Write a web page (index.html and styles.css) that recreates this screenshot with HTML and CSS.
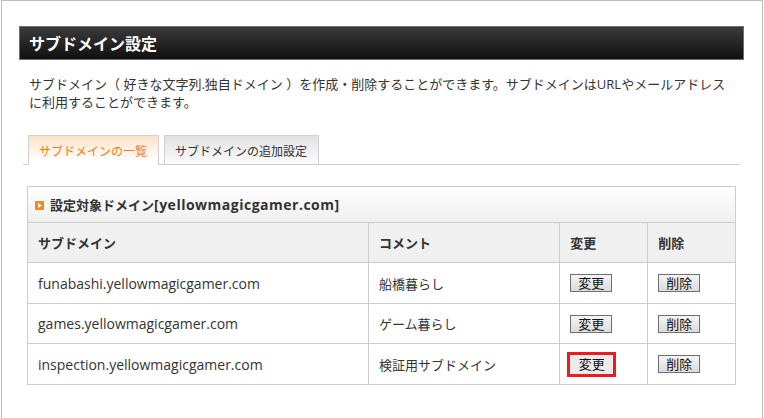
FILE: index.html
```html
<!DOCTYPE html>
<html lang="ja">
<head>
<meta charset="utf-8">
<link rel="stylesheet" href="styles.css">
</head>
<body>
<div class="frame">
  <div class="section">
    <h1 class="page-title">サブドメイン設定</h1>
    <p class="desc">サブドメイン（ 好きな文字列.独自ドメイン ）を作成・削除することができます。サブドメインはURLやメールアドレス<br>に利用することができます。</p>
    <div class="tabs">
      <div class="tab active">サブドメインの一覧</div>
      <div class="tab">サブドメインの追加設定</div>
    </div>
    <div class="box">
      <div class="box-title"><span class="mark"><svg width="9" height="9" viewBox="0 0 9 9"><rect width="9" height="9" fill="#f0891e"/><path d="M3 2 L7 4.5 L3 7 Z" fill="#fff"/></svg></span>設定対象ドメイン<span class="latin">[yellowmagicgamer.com]</span></div>
      <table class="list">
        <colgroup>
          <col class="c-sub"><col class="c-com"><col class="c-btn"><col class="c-btn2">
        </colgroup>
        <thead>
          <tr><th>サブドメイン</th><th>コメント</th><th>変更</th><th>削除</th></tr>
        </thead>
        <tbody>
          <tr class="r1"><td class="dom">funabashi.yellowmagicgamer.com</td><td>船橋暮らし</td><td><button class="btn">変更</button></td><td><button class="btn">削除</button></td></tr>
          <tr class="r2"><td class="dom">games.yellowmagicgamer.com</td><td>ゲーム暮らし</td><td><button class="btn">変更</button></td><td><button class="btn">削除</button></td></tr>
          <tr class="r3"><td class="dom">inspection.yellowmagicgamer.com</td><td>検証用サブドメイン</td><td><button class="btn hl">変更</button></td><td><button class="btn">削除</button></td></tr>
        </tbody>
      </table>
    </div>
  </div>
</div>
</body>
</html>
```
FILE: styles.css
```css
html, body {
  margin: 0;
  padding: 0;
  background: #fff;
}
body {
  font-family: "Open Sans", "Noto Sans CJK JP", sans-serif;
  color: #333;
  font-size: 13px;
}
.frame {
  margin-left: 1px;
  width: 762px;
  height: 418px;
  box-sizing: border-box;
  border: 1px solid #bdbdbd;
  border-bottom: none;
  padding: 25px 18px 0 17px;
}
.section {
  width: 725px;
}
.page-title {
  margin: 0;
  height: 34px;
  box-sizing: border-box;
  border: 1px solid #6e6e6e;
  background: linear-gradient(#3b3b3b, #101010);
  color: #fff;
  font-family: "Noto Sans CJK JP", sans-serif;
  font-size: 16px;
  font-weight: bold;
  line-height: 32px;
  padding-left: 9px;
}
.desc {
  margin: 15px 0 0 0;
  padding-left: 10px;
  line-height: 18px;
  font-size: 13px;
  color: #333;
  white-space: nowrap;
}
.tabs {
  display: flex;
  gap: 5px;
  margin: 24px 4px 0 4px;
  padding-left: 5px;
  border-bottom: 1px solid #ccc;
  height: 29px;
}
.tab {
  height: 29px;
  box-sizing: border-box;
  border: 1px solid #cfcfcf;
  border-bottom: none;
  font-family: "Noto Sans CJK JP", sans-serif;
  font-size: 12px;
  line-height: 30px;
  padding: 0 11px 0 10px;
  color: #333;
  background: linear-gradient(#e2e2e2, #fbfbfb);
}
.tab.active {
  height: 30px;
  color: #f47a16;
  background: linear-gradient(#fde2c6, #ffffff 85%);
}
.box {
  margin: 21px 8px 0 8px;
  border: 1px solid #ccc;
}
.box-title {
  height: 36px;
  box-sizing: border-box;
  border-bottom: 1px solid #ccc;
  background: linear-gradient(#ffffff, #efefef);
  font-family: "Noto Sans CJK JP", sans-serif;
  font-weight: bold;
  font-size: 13px;
  line-height: 36px;
  padding-left: 7px;
  display: flex;
  align-items: center;
}
.box-title .latin {
  font-family: "Open Sans", sans-serif;
  font-size: 14px;
  font-weight: bold;
  letter-spacing: 0.5px;
}
.mark {
  display: inline-flex;
  margin-right: 6px;
  margin-top: 1px;
}
.list {
  width: 100%;
  border-collapse: collapse;
  table-layout: fixed;
  border-style: hidden;
}
.c-sub { width: 340px; }
.c-com { width: 191px; }
.c-btn { width: 88px; }
.c-btn2 { width: 87px; }
.list th, .list td {
  border: 1px solid #ccc;
  padding: 0 10px;
  text-align: left;
  vertical-align: middle;
  font-size: 13px;
  white-space: nowrap;
}
.list th {
  background: #f0f0f0;
  font-family: "Noto Sans CJK JP", sans-serif;
  font-weight: bold;
  height: 39px;
}
.list td {
  height: 40px;
  font-family: "Noto Sans CJK JP", sans-serif;
}
.list td.dom {
  font-family: "Open Sans", sans-serif;
  font-size: 14px;
}
.list tr.r2 td { height: 39px; }
.btn {
  display: block;
  width: 42px;
  height: 18px;
  margin: 0;
  padding: 0;
  box-sizing: border-box;
  border: 1px solid #707070;
  background: linear-gradient(#f4f4f4, #dcdcdc);
  font-family: "Noto Sans CJK JP", sans-serif;
  font-size: 13px;
  line-height: 16px;
  color: #111;
  text-align: center;
}
.btn.hl {
  width: 43px;
  height: 19px;
  outline: 3px solid #ec1c24;
  border-color: #ececec;
  background: #ececec;
}
```
